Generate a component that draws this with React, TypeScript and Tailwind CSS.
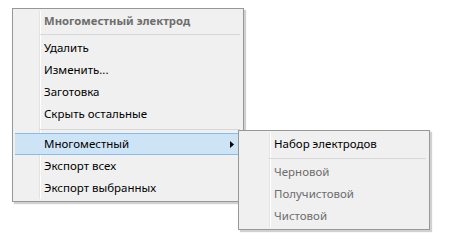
import React from "react";

type Item =
  | { kind: "header"; label: string }
  | { kind: "sep"; line: number; h: number }
  | { kind: "item"; label: string; active?: boolean; sub?: boolean; disabled?: boolean };

const mainItems: Item[] = [
  { kind: "header", label: "Многоместный электрод" },
  { kind: "sep", line: 1, h: 4 },
  { kind: "item", label: "Удалить" },
  { kind: "item", label: "Изменить..." },
  { kind: "item", label: "Заготовка" },
  { kind: "item", label: "Скрыть остальные" },
  { kind: "sep", line: 4, h: 8 },
  { kind: "item", label: "Многоместный", active: true, sub: true },
  { kind: "item", label: "Экспорт всех" },
  { kind: "item", label: "Экспорт выбранных" },
];

const subItems: Item[] = [
  { kind: "item", label: "Набор электродов" },
  { kind: "sep", line: 3, h: 6 },
  { kind: "item", label: "Черновой", disabled: true },
  { kind: "item", label: "Получистовой", disabled: true },
  { kind: "item", label: "Чистовой", disabled: true },
];

function Row({ item, gutter }: { item: Item; gutter: string }) {
  if (item.kind === "sep") {
    return (
      <div className="flex" style={{ height: item.h }}>
        <div className={gutter} />
        <div className="flex-1 pr-[1px]">
          <div style={{ height: item.line }} />
          <div className="h-px bg-[#d7d7d7]" />
        </div>
      </div>
    );
  }
  if (item.kind === "header") {
    return (
      <div className="flex h-[22px] items-center pb-[2px]">
        <div className={gutter} />
        <span className="pl-[5px] text-[11.3px] font-bold text-[#6d6d6d]">{item.label}</span>
      </div>
    );
  }
  return (
    <div
      className={
        "flex h-[22px] items-center border-y " +
        (item.active ? "border-[#8cbbe6] bg-[#cde3f6]" : "border-transparent")
      }
    >
      <div className={gutter} />
      <span className={"flex-1 pl-[5px] " + (item.disabled ? "text-[#6d6d6d]" : "text-black")}>
        {item.label}
      </span>
      {item.sub && (
        <svg width="4" height="7" viewBox="0 0 4 7" className="mr-[7px]">
          <path d="M0 0 L4 3.5 L0 7 Z" fill="#000" />
        </svg>
      )}
    </div>
  );
}

function Menu({
  items,
  width,
  gutterW,
}: {
  items: Item[];
  width: string;
  gutterW: string;
}) {
  const gutter = `${gutterW} shrink-0 self-stretch`;
  return (
    <div className={`${width} relative border border-[#979797] bg-[#f0f0f0] p-[2px] shadow-[2px_2px_1px_rgba(0,0,0,0.18)]`}>
      {/* gutter divider */}
      <div className="pointer-events-none absolute inset-y-[2px] left-[2px] flex">
        <div className={gutterW} />
        <div className="w-px bg-[#e2e3e3]" />
        <div className="w-px bg-white" />
      </div>
      <div className="relative flex flex-col">
        {items.map((it, i) => (
          <Row key={i} item={it} gutter={gutter} />
        ))}
      </div>
    </div>
  );
}

export default function App() {
  return (
    <div
      className="relative h-[243px] w-[449px] overflow-hidden bg-white text-[11.5px] leading-none"
      style={{ fontFamily: '"Noto Sans", "Open Sans", sans-serif' }}
    >
      <div className="pl-[12px] pt-[8px]">
        <Menu items={mainItems} width="w-[232px]" gutterW="w-[24px]" />
      </div>
      {/* submenu flyout */}
      <div className="absolute left-[238px] top-[130px]">
        <Menu items={subItems} width="w-[192px]" gutterW="w-[28px]" />
      </div>
    </div>
  );
}
